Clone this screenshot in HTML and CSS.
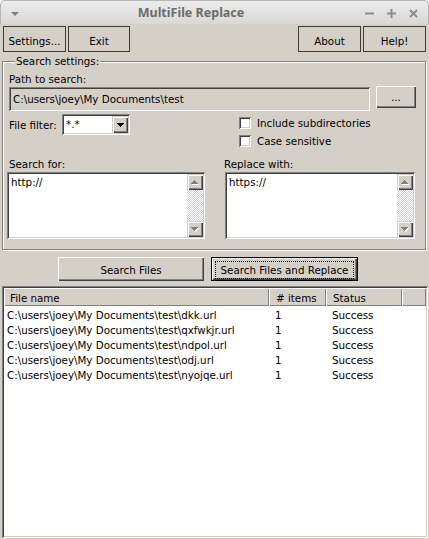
FILE: index.html
```html
<!DOCTYPE html>
<html lang="en">
<head>
<meta charset="utf-8">
<title>MultiFile Replace</title>
<link rel="stylesheet" href="styles.css">
</head>
<body>
<div class="window">
  <div class="titlebar">
    <svg class="wm-menu" width="8" height="4" viewBox="0 0 8 4"><path d="M0 0h8L4 4z" fill="#7d7d7d"/></svg>
    <div class="title">MultiFile Replace</div>
    <div class="wm-btns">
      <svg width="9" height="9" viewBox="0 0 9 9"><path d="M0 4.5h9" stroke="#8c8c8c" stroke-width="2"/></svg>
      <svg width="9" height="9" viewBox="0 0 9 9"><path d="M0 4.5h9M4.5 0v9" stroke="#8c8c8c" stroke-width="2"/></svg>
      <svg width="9" height="9" viewBox="0 0 9 9"><path d="M1 1l7 7M8 1L1 8" stroke="#8c8c8c" stroke-width="2"/></svg>
    </div>
  </div>

  <div class="toolbar">
    <div class="tbtn w63">Settings...</div>
    <div class="tbtn w62">Exit</div>
    <div class="spacer"></div>
    <div class="tbtn w63">About</div>
    <div class="tbtn w63">Help!</div>
  </div>

  <fieldset class="group">
    <legend>Search settings:</legend>
    <div class="lbl">Path to search:</div>
    <div class="path-row">
      <div class="entry">C:\users\joey\My Documents\test</div>
      <div class="btn browse">...</div>
    </div>
    <div class="filter-row">
      <div class="filter">
        <span class="flabel">File filter:</span>
        <div class="combo">
          <span class="combo-text">*.*</span>
          <span class="combo-btn"><svg width="7" height="4" viewBox="0 0 7 4" shape-rendering="crispEdges"><path d="M0 0h7v1h-1v1h-1v1h-1v1h-1v-1h-1v-1h-1v-1h-1z" fill="#000"/></svg></span>
        </div>
      </div>
      <div class="checks">
        <div class="check"><span class="cbox"></span><span>Include subdirectories</span></div>
        <div class="check"><span class="cbox"></span><span>Case sensitive</span></div>
      </div>
    </div>
    <div class="text-row">
      <div class="tcol tcol-search">
        <div class="lbl">Search for:</div>
        <div class="tbox">
          <div class="tbox-text">http://</div>
          <div class="vscroll">
            <div class="sbtn"><svg width="8" height="5" viewBox="0 0 8 5" shape-rendering="crispEdges"><path transform="translate(1,1)" d="M3 0h1v1h1v1h1v1h1v1H0V3h1V2h1V1h1z" fill="#fff"/><path d="M3 0h1v1h1v1h1v1h1v1H0V3h1V2h1V1h1z" fill="#808080"/></svg></div>
            <div class="trough"></div>
            <div class="sbtn"><svg width="8" height="5" viewBox="0 0 8 5" shape-rendering="crispEdges"><path transform="translate(1,1)" d="M0 0h7v1h-1v1h-1v1h-1v1h-1v-1h-1v-1h-1v-1h-1z" fill="#fff"/><path d="M0 0h7v1h-1v1h-1v1h-1v1h-1v-1h-1v-1h-1v-1h-1z" fill="#808080"/></svg></div>
          </div>
        </div>
      </div>
      <div class="tcol tcol-replace">
        <div class="lbl lbl-replace">Replace with:</div>
        <div class="tbox">
          <div class="tbox-text">https://</div>
          <div class="vscroll">
            <div class="sbtn"><svg width="8" height="5" viewBox="0 0 8 5" shape-rendering="crispEdges"><path transform="translate(1,1)" d="M3 0h1v1h1v1h1v1h1v1H0V3h1V2h1V1h1z" fill="#fff"/><path d="M3 0h1v1h1v1h1v1h1v1H0V3h1V2h1V1h1z" fill="#808080"/></svg></div>
            <div class="trough"></div>
            <div class="sbtn"><svg width="8" height="5" viewBox="0 0 8 5" shape-rendering="crispEdges"><path transform="translate(1,1)" d="M0 0h7v1h-1v1h-1v1h-1v1h-1v-1h-1v-1h-1v-1h-1z" fill="#fff"/><path d="M0 0h7v1h-1v1h-1v1h-1v1h-1v-1h-1v-1h-1v-1h-1z" fill="#808080"/></svg></div>
          </div>
        </div>
      </div>
    </div>
  </fieldset>

  <div class="actions">
    <div class="btn action">Search Files</div>
    <div class="btn action default"><span class="focus">Search Files and Replace</span></div>
  </div>

  <div class="table">
    <div class="thead">
      <div class="th c1">File name</div>
      <div class="th c2"># items</div>
      <div class="th c3">Status</div>
      <div class="th c4"></div>
    </div>
    <div class="tbody">
      <div class="tr"><div class="td c1">C:\users\joey\My Documents\test\dkk.url</div><div class="td c2">1</div><div class="td c3">Success</div></div>
      <div class="tr"><div class="td c1">C:\users\joey\My Documents\test\qxfwkjr.url</div><div class="td c2">1</div><div class="td c3">Success</div></div>
      <div class="tr"><div class="td c1">C:\users\joey\My Documents\test\ndpol.url</div><div class="td c2">1</div><div class="td c3">Success</div></div>
      <div class="tr"><div class="td c1">C:\users\joey\My Documents\test\odj.url</div><div class="td c2">1</div><div class="td c3">Success</div></div>
      <div class="tr"><div class="td c1">C:\users\joey\My Documents\test\nyojqe.url</div><div class="td c2">1</div><div class="td c3">Success</div></div>
    </div>
  </div>
</div>
</body>
</html>
```

FILE: styles.css
```css
* { box-sizing: border-box; }
html, body { margin: 0; padding: 0; background: #ffffff; }
body {
  font-family: "DejaVu Sans", sans-serif;
  font-size: 10.3px;
  line-height: 12px;
  color: #000;
}
.window {
  width: 429px;
  height: 539px;
  display: flex;
  flex-direction: column;
  background: #d4d0c8;
  border-radius: 5px 5px 0 0;
  overflow: hidden;
}

/* title bar */
.titlebar {
  flex: none;
  height: 24px;
  display: flex;
  align-items: center;
  padding: 1px 10px 0 10px;
  background: linear-gradient(#ececec, #dad8d4);
  border: 1px solid #b5b5b5;
  border-bottom: none;
  border-radius: 5px 5px 0 0;
}
.wm-menu { flex: none; margin-top: 2px; }
.title {
  flex: 1;
  text-align: center;
  font-family: "Noto Sans", "DejaVu Sans", sans-serif;
  font-weight: bold;
  font-size: 12.5px;
  color: #6c6c6c;
  padding-right: 2px;
}
.wm-btns { flex: none; display: flex; gap: 13px; align-items: center; }
.wm-btns svg { display: block; }

/* toolbar */
.toolbar {
  flex: none;
  display: flex;
  gap: 2px;
  padding: 2px 3px 0 3px;
}
.spacer { flex: 1; }
.tbtn {
  height: 26px;
  border: 1px solid #3c3c3c;
  display: flex;
  align-items: center;
  justify-content: center;
  padding-top: 3px;
}
.w63 { width: 63px; }
.w62 { width: 62px; }

/* group box */
.group {
  flex: none;
  margin: 3px 0 0 2px;
  width: 424px;
  padding: 6px 8px 10px 4px;
  border: 1px solid #808080;
  box-shadow: inset 1px 1px 0 #fff, 1px 1px 0 #fff;
  min-width: 0;
}
.group legend {
  margin-left: 8px;
  padding: 0 1px;
  line-height: 12px;
  background: #d4d0c8;
}
.lbl { margin-left: 2px; height: 12px; white-space: nowrap; }
.lbl-replace { margin-left: -1px; }

.btn {
  display: flex;
  align-items: center;
  justify-content: center;
  background: #d4d0c8;
  box-shadow: inset 1px 1px 0 #fff, inset -1px -1px 0 #404040, inset -2px -2px 0 #808080;
}

.path-row { display: flex; align-items: flex-start; margin-top: 1px; height: 25px; }
.entry {
  margin: 1px 0 0 2px;
  width: 361px;
  height: 24px;
  padding: 0 4px;
  line-height: 24px;
  white-space: nowrap;
  box-shadow: inset 1px 1px 0 #808080, inset -1px -1px 0 #fff, inset 2px 2px 0 #404040, inset -2px -2px 0 #d4d0c8;
}
.browse { margin-left: 6px; width: 40px; height: 22px; padding-bottom: 1px; }

.filter-row {
  display: grid;
  grid-template-columns: 232px 1fr;
  margin-top: 3px;
  height: 36px;
}
.filter { display: flex; align-items: center; height: 21px; margin-left: 2px; }
.flabel { width: 53px; white-space: nowrap; }
.combo {
  width: 68px;
  height: 21px;
  display: flex;
  padding: 2px;
  background: #fff;
  box-shadow: inset 1px 1px 0 #808080, inset -1px -1px 0 #fff, inset 2px 2px 0 #404040, inset -2px -2px 0 #d4d0c8;
}
.combo-text { flex: 1; padding-left: 2px; line-height: 17px; }
.combo-btn {
  width: 16px;
  height: 17px;
  display: flex;
  align-items: center;
  justify-content: center;
  background: #d4d0c8;
  box-shadow: inset 1px 1px 0 #d4d0c8, inset 2px 2px 0 #fff, inset -1px -1px 0 #404040, inset -2px -2px 0 #808080;
}
.combo-btn svg { display: block; margin-top: 1px; }

.checks { padding-top: 0; }
.check { display: flex; align-items: center; gap: 6px; height: 18px; white-space: nowrap; }
.cbox {
  width: 12px;
  height: 12px;
  flex: none;
  background: #fff;
  box-shadow: inset 1px 1px 0 #808080, inset -1px -1px 0 #fff, inset 2px 2px 0 #404040, inset -2px -2px 0 #d4d0c8;
}

.text-row { display: flex; gap: 20px; margin-top: 8px; }
.tcol-search { width: 198px; }
.tcol-replace { width: 190px; }
.tbox {
  margin-top: 2px;
  height: 67px;
  display: flex;
  padding: 2px;
  background: #fff;
  box-shadow: inset 1px 1px 0 #808080, inset -1px -1px 0 #fff, inset 2px 2px 0 #404040, inset -2px -2px 0 #d4d0c8;
}
.tbox-text { flex: 1; padding: 2px 0 0 2px; }
.vscroll { width: 16px; display: flex; flex-direction: column; }
.sbtn {
  flex: none;
  height: 16px;
  display: flex;
  align-items: center;
  justify-content: center;
  background: #d4d0c8;
  box-shadow: inset 1px 1px 0 #d4d0c8, inset 2px 2px 0 #fff, inset -1px -1px 0 #404040, inset -2px -2px 0 #808080;
}
.sbtn svg { display: block; }
.trough {
  flex: 1;
  background-image: repeating-conic-gradient(#ffffff 0 25%, #d4d0c8 0 50%);
  background-size: 2px 2px;
}

/* action buttons */
.actions {
  flex: none;
  display: flex;
  gap: 7px;
  margin-top: 7px;
  padding-left: 58px;
}
.action { height: 24px; width: 146px; padding-top: 2px; }
.default {
  width: 147px;
  border: 1px solid #000;
  padding: 3px 3px 1px 3px;
}
.focus {
  flex: 1;
  align-self: stretch;
  display: flex;
  align-items: center;
  justify-content: center;
  border: 1px dotted #000;
  white-space: nowrap;
}

/* results table */
.table {
  flex: 1;
  margin: 5px 1px 1px 2px;
  padding: 2px;
  background: #fff;
  display: flex;
  flex-direction: column;
  box-shadow: inset 1px 1px 0 #808080, inset -1px -1px 0 #fff, inset 2px 2px 0 #404040, inset -2px -2px 0 #d4d0c8;
}
.thead { display: flex; height: 18px; flex: none; }
.th {
  background: #d4d0c8;
  line-height: 18px;
  padding-left: 6px;
  padding-top: 1px;
  white-space: nowrap;
  box-shadow: inset 1px 1px 0 #fff, inset -1px -1px 0 #808080;
}
.c1 { width: 265px; flex: none; }
.c2 { width: 57px; flex: none; }
.c3 { width: 76px; flex: none; }
.c4 { flex: 1; }
.th.c2, .th.c3 { padding-left: 7px; }
.tbody { padding-top: 2px; }
.tr { display: flex; height: 15px; line-height: 15px; white-space: nowrap; }
.td.c1 { padding-left: 3px; }
.td.c2 { padding-left: 6px; }
.td.c3 { padding-left: 6px; }
```
